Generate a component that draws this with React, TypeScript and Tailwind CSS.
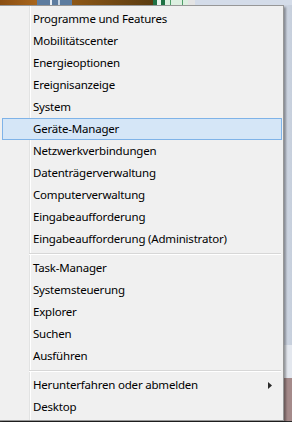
import { Fragment } from "react";

type Entry = { label: string; active?: boolean; submenu?: boolean } | "sep";

const entries: Entry[] = [
  { label: "Programme und Features" },
  { label: "Mobilitätscenter" },
  { label: "Energieoptionen" },
  { label: "Ereignisanzeige" },
  { label: "System" },
  { label: "Geräte-Manager", active: true },
  { label: "Netzwerkverbindungen" },
  { label: "Datenträgerverwaltung" },
  { label: "Computerverwaltung" },
  { label: "Eingabeaufforderung" },
  { label: "Eingabeaufforderung (Administrator)" },
  "sep",
  { label: "Task-Manager" },
  { label: "Systemsteuerung" },
  { label: "Explorer" },
  { label: "Suchen" },
  { label: "Ausführen" },
  "sep",
  { label: "Herunterfahren oder abmelden", submenu: true },
  { label: "Desktop" },
];

function TopStrip() {
  // bits of the desktop/taskbar peeking out above the menu
  return (
    <div className="flex h-[5px] shrink-0">
      <div className="w-[37px] bg-[linear-gradient(to_right,#8a4e12,#a8661c)]" />
      <div className="w-[35px] bg-[#5d7c9f] flex justify-center gap-[6px]">
        <div className="w-[2px] bg-[#e8eef5]" />
        <div className="w-[2px] bg-[#c9d6e4]" />
      </div>
      <div className="w-[81px] bg-[linear-gradient(to_right,#8d5716,#5a3b10)]" />
      <div className="w-[12px] bg-[#1f7144] flex justify-center">
        <div className="w-[4px] bg-[#e9f3ec]" />
      </div>
      <div className="w-[23px] bg-[#dcefe0] flex justify-around">
        <div className="w-[1px] bg-[#4f9e6a]" />
        <div className="w-[1px] bg-[#4f9e6a]" />
      </div>
      <div className="w-[7px] bg-[#e4e4e4]" />
      <div className="flex-1 bg-[#d4dce9]" />
    </div>
  );
}

function MenuRow({ label, active, submenu }: { label: string; active?: boolean; submenu?: boolean }) {
  return (
    <div
      className={`ml-[2px] mr-[1px] h-[22px] flex items-center justify-between pl-[30px] pr-[9px] border ${
        active ? "bg-[#d5e6f7] border-[#7fb3e8]" : "border-transparent"
      }`}
    >
      <span className="leading-[20px] pb-[1px] whitespace-nowrap">{label}</span>
      {submenu && (
        <svg width="4" height="7" viewBox="0 0 4 7" className="mt-[1px]">
          <path d="M0 0 L4 3.5 L0 7 Z" fill="#2b2b2b" />
        </svg>
      )}
    </div>
  );
}

export default function App() {
  return (
    <div className="w-[292px] h-[422px] overflow-hidden flex flex-col bg-[#d4dce9] font-['Noto_Sans',sans-serif] text-[11.5px] tracking-[-0.2px] text-black">
      <TopStrip />

      <div className="flex flex-1 min-h-0">
        {/* Win+X menu */}
        <div className="relative z-10 w-[284px] shrink-0 border-t border-r border-b border-[#979797] pt-[2px] shadow-[2px_2px_2px_rgba(0,0,0,0.35)] bg-[linear-gradient(to_right,#f0f0f0_29px,#e2e3e3_29px,#e2e3e3_30px,#ffffff_30px,#ffffff_31px,#f0f0f0_31px)]">
          {entries.map((e, i) =>
            e === "sep" ? (
              <div key={i} className="h-[7px] pl-[29px] pr-[2px] pt-[3px]">
                <div className="h-[1px] bg-[#d7d7d7]" />
                <div className="h-[1px] bg-white" />
              </div>
            ) : (
              <Fragment key={i}>
                <MenuRow {...e} />
              </Fragment>
            )
          )}
        </div>

        {/* desktop behind the menu */}
        <div className="flex-1 flex flex-col">
          <div className="h-[340px] bg-[linear-gradient(to_right,#d2d9e6,#c6cfdc)]" />
          <div className="h-[33px] bg-[#e3e7ee]" />
          <div className="flex-1 bg-[#a48a8a]" />
        </div>
      </div>

      <div className="h-[1px] shrink-0 bg-[#2b2b2b]" />
    </div>
  );
}
